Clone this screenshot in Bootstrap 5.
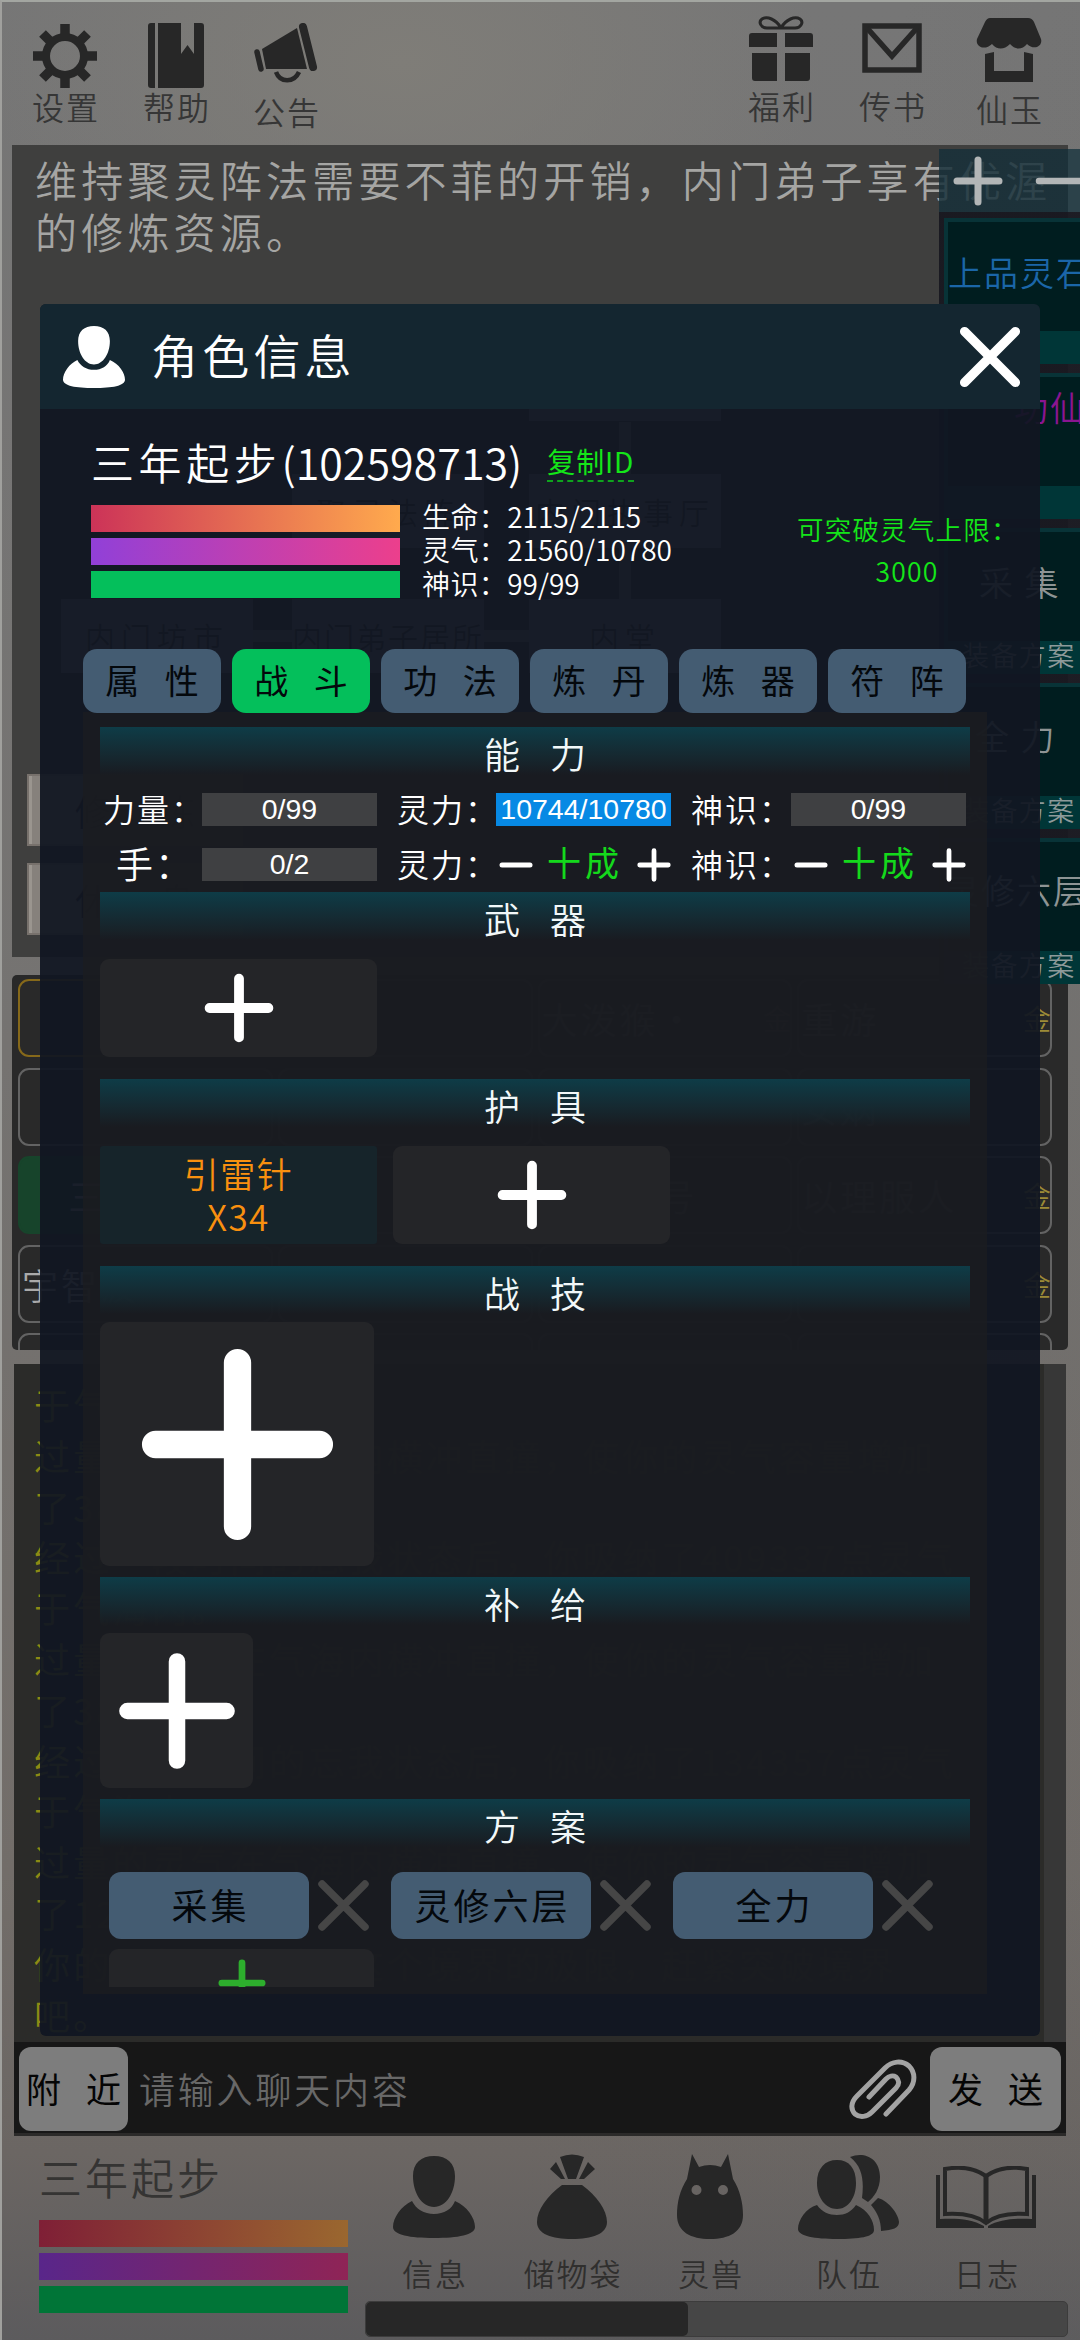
<!DOCTYPE html>
<html lang="zh-CN">
<head>
<meta charset="utf-8">
<title>角色信息</title>
<meta name="viewport" content="width=device-width, initial-scale=1">
<link rel="stylesheet" href="https://cdn.jsdelivr.net/npm/bootstrap@5.3.0/dist/css/bootstrap.min.css">
<style>
body{margin:0;background:#6b6865;font-family:"Noto Sans CJK SC","Noto Sans",sans-serif;font-weight:350;line-height:1;color:#fff}
svg{display:block;flex:none}
.screen{width:1080px;height:2340px;overflow:hidden;border-top:2px solid #a3a6a1;border-left:2px solid #a0a09d;
 background:radial-gradient(ellipse 420px 260px at 400px 60px,#7f7d78 0,#7f7d7800 100%),linear-gradient(100deg,#5b5a5b00 60%,#62626133),linear-gradient(#767676 0,#757371 45%,#726d69 80%,#6b6663 92%,#5c5b5d 100%)}
.screen *{white-space:nowrap}
/* top shortcuts */
.topbar{height:143px;padding:0 38px 0 30px}
.tool{color:#363636;font-size:32px;width:66px}
.tool .glyph{height:72px;color:#272727;justify-content:center;display:flex}
.tool span{letter-spacing:2px;line-height:34px;margin:-6px -2px 0 0}
/* scene panel */
.scene{height:812px;margin:0 10px;background:#3f3f3e;padding:8px 0 0 23px;font-size:42px;letter-spacing:4.2px;line-height:52px;color:#a5a5a3;width:1056px}
.node{background:#7d7b82;color:#2c2c2c;font-size:30px;letter-spacing:6px;height:74px;width:192px}
.link-line{background:#75737a}
.scroll-btn{background:#86817c;height:72px;width:216px;border:2px solid #77716c;box-shadow:inset 3px 0 0 #9a958f;color:#171717;font-size:36px;word-spacing:40px}
/* player list */
.roster{margin:18px 11px 0 10px;width:1056px;height:375px;background:#292929;border-radius:5px;padding:4px 16px 0 6px;overflow:hidden;display:grid;grid-template-columns:repeat(4,1fr);grid-auto-rows:78px;gap:10.5px 5px}
.roster div{border:2px solid #636363;border-radius:11px;color:#aaa;font-size:36px;letter-spacing:3px;padding-left:2px}
.roster i{color:#9c8b37;font-style:normal;font-size:28px;margin-right:-4px}
/* log */
.chatlog{margin:14px 0 0 12px;width:1052px;height:678px;background:#2b2b29;border-right:22px solid #373737;padding:15px 0 0 20px;color:#8d8a14;font-size:36px;line-height:50.8px;letter-spacing:3.2px;overflow:hidden}
.chatbar{margin-left:12px;width:1052px;height:94px;background:#171717;border-bottom:3px solid #2b2a29;padding:2px 5px 0 5px}
.grey-btn{background:#7d7d7d;color:#050505;border-radius:12px;height:84px;font-size:35px;font-weight:400;word-spacing:17px;display:flex;align-items:center;justify-content:center;padding-bottom:3px}
.prompt{color:#686868;font-size:36px;letter-spacing:2.8px}
/* footer */
.footer-bar{height:200px;margin-left:2px;position:relative}
.bar3{width:309px}
.bar3 div{height:27px;margin-bottom:6px}
.h1a{background:linear-gradient(90deg,#7f1f36,#9a672f)}.h2a{background:linear-gradient(90deg,#59268a,#8f2456)}.h3a{background:#007537}
.h1b{background:linear-gradient(90deg,#cc3358,#ffaa4d)}.h2b{background:linear-gradient(90deg,#9140d8,#ec3f8c)}.h3b{background:#04bf5b}
.navitem{color:#302f2e;font-size:31px;width:104px;flex:none}
.navitem .glyph{height:85px;color:#272727;display:flex;align-items:center;justify-content:center}
.navitem span{margin:17px -2px 0 0;line-height:34px;letter-spacing:2px}
.track{left:363px;top:2299px;width:703px;height:36px;background:#464646;border:1px solid #3c3c3c;border-radius:5px}
.track div{width:322px;height:34px;background:#272727;border-radius:5px}
/* side widget */
.side{left:939px;top:149px;width:190px;height:835px;background:linear-gradient(#17171f00 63px,#17171fee 63px)}
.side .ctl{height:63px;margin-bottom:-3px;background:linear-gradient(90deg,#162f39d4 129px,#2c424a 129px)}
.side .cell{margin:9px 0 0 5px;height:146px;background:#001d1f;border:4px solid #083337;border-bottom:0;border-right:0}
.side .cell .nm{flex:1;font-size:34px;letter-spacing:2px;color:#8d9494}
.side .cell .ft{height:33px;background:#003637;margin-left:-4px;font-size:27px;letter-spacing:1.4px;color:#8d9a9a}
/* dialog */
.dlg{left:40px;top:304px;width:1000px;height:1732px;border-radius:6px;background:#111622f0;overflow:hidden}
.dlg-head{height:105px;background:#142831ee;padding:0 19px 0 23px}
.dlg-head h1{font-size:47px;letter-spacing:4.2px;margin:-4px 0 0 26px;font-weight:350}
.who{font-size:43px;height:72px;padding:0 0 0 51px}
.who .nick{letter-spacing:4.6px}
.copyid{color:#14e619;font-size:28px;border-bottom:2px dashed #0fa31d;line-height:33px;margin-left:25px;margin-top:4px;font-weight:400;height:37px;letter-spacing:.8px}
.stat{font-size:28px;line-height:33.4px}
.stat b{font-weight:350;letter-spacing:.4px}
.limit{color:#14e619;font-size:26.5px;line-height:41.5px;letter-spacing:1.2px;width:220px}
.tabs{margin:0 0 0 43px;gap:11px}
.tab{width:138px;height:64px;background:#445c72;border-radius:14px;color:#04080c;font-size:34px;font-weight:400;word-spacing:18px;display:flex;align-items:center;justify-content:center;padding-bottom:2px}
.tab.on{background:#04bf5b}
.pane{margin:-1px 0 0 43px;width:904px;height:1282px;background:#1c1d20cc;padding:15px 17px 0;overflow:hidden}
.sec{height:48px;background:linear-gradient(#0e3c47,#152a32 55%,#1c1d2000);font-size:36px;word-spacing:22px;color:#f2f8f9;display:flex;align-items:center;justify-content:center;padding:4px 0 0 0;line-height:36px}
.lab{font-size:32px;letter-spacing:2px;width:102px;margin-top:-3px}
.fld{width:175px;height:33px;background:#3f4042;font-family:"Liberation Sans",Arial,sans-serif;font-size:28.5px;font-weight:400;display:flex;align-items:center;justify-content:center}
.fld.sel{background:#0789e4}
.step{width:175px;color:#14d91c;font-size:34px;letter-spacing:4px;padding:0 0 0 3px}
.step span{font-weight:400;margin-top:-5px}
.slot{width:277px;height:98px;background:#242528;border-radius:9px;display:flex;align-items:center;justify-content:center}
.item{background:#16242a;color:#f9900f;font-size:35px;line-height:43px;text-align:center;border-radius:3px;letter-spacing:1.5px;padding-bottom:2px}
.plan{width:200px;height:67px;background:#445c72;border-radius:12px;color:#04080c;font-size:36px;font-weight:400;letter-spacing:3px;display:flex;align-items:center;justify-content:center;padding:0 0 3px 3px}
.plans{gap:22px;padding-left:9px;margin-top:25px}
</style>
<script src="https://cdn.jsdelivr.net/npm/bootstrap@5.3.0/dist/js/bootstrap.bundle.min.js"></script>
</head>
<body>
<svg width="0" height="0" class="position-absolute">
 <symbol id="plus" viewBox="0 0 100 100"><path d="M50 8V92M8 50H92" stroke="currentColor" stroke-width="14" stroke-linecap="round"/></symbol>
 <symbol id="cross" viewBox="0 0 50 50"><path d="M4 4L46 46M46 4L4 46" stroke="currentColor" stroke-width="7.5" stroke-linecap="round"/></symbol>
 <symbol id="person" viewBox="0 0 82 82"><path fill="currentColor" d="M41 0C54 0 62 7 62 20C62 37 53 51 41 51S20 37 20 20C20 7 28 0 41 0ZM19 45C23 53 31 58 41 58S59 53 62 45C74 50 82 62 82 71C82 79 65 82 41 82S0 79 0 71C0 62 8 50 19 45Z"/></symbol>
</svg>
<div class="screen position-relative">
 <header class="topbar d-flex align-items-start">
  <div class="tool d-flex flex-column align-items-center" style="margin-top:21px"><div class="glyph"><svg width="66" height="66" viewBox="0 0 66 66" fill="none" stroke="currentColor"><circle cx="33" cy="33" r="19" stroke-width="8"/><path stroke-width="9.500" d="M33 1V12M33 54V65M1 33H12M54 33H65M10.500 10.500L19 19M47 47L55.500 55.500M10.500 55.500L19 47M47 19L55.500 10.500"/></svg></div><span>设置</span></div>
  <div class="tool d-flex flex-column align-items-center" style="margin:21px 0 0 45px"><div class="glyph"><svg width="56" height="65" viewBox="0 0 56 65" fill="currentColor"><path d="M3 0H7V65H3Q0 65 0 62V3Q0 0 3 0ZM10 0H33V31L39.500 22L46 31V0H53Q56 0 56 3V62Q56 65 53 65H10Z"/></svg></div><span>帮助</span></div>
  <div class="tool d-flex flex-column align-items-center" style="margin:21px 0 0 44px"><div class="glyph" style="height:77px"><svg width="64" height="60" viewBox="0 0 64 60"><path fill="currentColor" d="M8 26L43 5L53 46H12Z"/><path d="M49 4L59 44" stroke="currentColor" stroke-width="8" stroke-linecap="round"/><path d="M3 29L7 46" stroke="currentColor" stroke-width="5.500" stroke-linecap="round"/><path d="M22 49C26 60 40 60 45 49" fill="none" stroke="currentColor" stroke-width="4.500"/></svg></div><span>公告</span></div>
  <div class="tool d-flex flex-column align-items-center ms-auto" style="margin-top:14px"><div class="glyph" style="height:78px"><svg width="64" height="65" viewBox="0 0 64 65"><path fill="currentColor" d="M3 17H28V31H0V20Q0 17 3 17ZM36 17H61Q64 17 64 20V31H36ZM3 37H28V65H6Q3 65 3 62ZM36 37H61V62Q61 65 58 65H36Z"/><path d="M32 12C27 3 18 0 13 3C9 6 12 12 18 12C26 12 27 12 32 12C37 3 46 0 51 3C55 6 52 12 46 12Z" fill="none" stroke="currentColor" stroke-width="3"/></svg></div><span>福利</span></div>
  <div class="tool d-flex flex-column align-items-center" style="margin:21px 0 0 45px"><div class="glyph" style="height:71px"><svg width="60" height="50" viewBox="0 0 60 50" fill="none" stroke="currentColor"><path d="M3 3H57V47H3Z" stroke-width="5.500"/><path d="M5 5L30 33L55 5" stroke-width="5.500"/></svg></div><span>传书</span></div>
  <div class="tool d-flex flex-column align-items-center" style="margin:16px 0 0 51px"><div class="glyph" style="height:79px"><svg width="66" height="64" viewBox="0 0 66 64" fill="currentColor"><path d="M14 0H52Q56 0 58 4L65 21C67 28 58 33 51 26C46 32 39 32 34 26C28 32 21 32 16 26C9 33-1 29 1 21L9 4Q11 0 14 0Z"/><path d="M9 36L18 34V53H48V34L57 36V64H9Z"/></svg></div><span>仙玉</span></div>
 </header>

 <section class="scene">维持聚灵阵法需要不菲的开销，内门弟子享有优渥<br>的修炼资源。
 </section>
 <!-- map nodes of the current area -->
 <div class="position-absolute link-line" style="left:617px;top:420px;width:12px;height:180px"></div>
 <div class="position-absolute link-line" style="left:250px;top:628px;width:280px;height:12px"></div>
 <div class="node position-absolute d-flex align-items-center justify-content-center" style="left:527px;top:345px">修炼室</div>
 <div class="node position-absolute d-flex align-items-center justify-content-center" style="left:290px;top:472px">聚灵法阵</div>
 <div class="node position-absolute d-flex align-items-center justify-content-center" style="left:527px;top:472px">内门执事厅</div>
 <div class="node position-absolute d-flex align-items-center justify-content-center" style="left:59px;top:597px">内门坊市</div>
 <div class="node position-absolute d-flex align-items-center justify-content-center" style="left:290px;top:597px;letter-spacing:2px">内门弟子居所</div>
 <div class="node position-absolute d-flex align-items-center justify-content-center" style="left:527px;top:597px">内堂</div>
 <div class="scroll-btn position-absolute d-flex align-items-center justify-content-center" style="left:25px;top:772px">修 炼</div>
 <div class="scroll-btn position-absolute d-flex align-items-center justify-content-center" style="left:25px;top:861px">休 息</div>

 <section class="roster">
  <div style="border-color:#86691a"></div><div></div><div class="d-flex align-items-center justify-content-between">大泼猴·<i>金</i></div><div class="d-flex align-items-center justify-content-between">重游<i>金</i></div>
  <div></div><div></div><div></div><div class="d-flex align-items-center">女娲</div>
  <div class="d-flex align-items-center justify-content-center" style="background:#17442b;border-color:#17442b">三年起步</div><div></div><div class="d-flex align-items-center">三副丹号</div><div class="d-flex align-items-center justify-content-between">以理服人<i>金</i></div>
  <div class="d-flex align-items-center">宇智波</div><div></div><div></div><div class="d-flex align-items-center justify-content-end"><i>金</i></div>
  <div></div><div></div><div></div><div></div>
 </section>

 <section class="chatlog">于气海内。<br>过量的灵气在气海内横冲直撞，使你的灵气容量增加<br>了38。<br>经过一段时间的忘我状态后，你吸纳了409337点灵气<br>于气海内。<br>过量的灵气在气海内横冲直撞，使你的灵气容量增加<br>了38。<br>经过一段时间的忘我状态后，你吸纳了134357点灵气<br>于气海内。<br>过量的灵气在气海内横冲直撞，使你的灵气容量增加<br>了12。<br>你的灵气已达到了这个境界的极限，赶紧突破境界<br>吧。</section>

 <section class="chatbar d-flex align-items-center">
  <div class="grey-btn" style="width:109px">附 近</div><div class="prompt" style="margin:-2px 0 0 11px">请输入聊天内容</div>
  <svg class="ms-auto" width="68" height="60" viewBox="0 0 68 60" fill="none" stroke="#a3a3a3" stroke-width="5" stroke-linecap="round" stroke-linejoin="round"><path d="M37 55L60 31C67 23 66 13 60 7C53 1 43 2 36 9L8 37C1 44 2 51 6 55C11 59 18 58 23 53L47 29C51 25 50 21 47 18C44 16 40 17 37 20L20 38"/></svg>
  <div class="grey-btn" style="width:131px;margin-left:13px">发 送</div>
 </section>

 <footer class="footer-bar d-flex">
  <div style="padding:16px 0 0 35px;width:366px">
   <div style="font-size:43px;letter-spacing:3px;line-height:48px;color:#353433;margin-bottom:20px">三年起步</div>
   <div class="bar3"><div class="h1a"></div><div class="h2a"></div><div class="h3a"></div></div>
  </div>
  <div class="d-flex" style="padding-top:18px;margin-left:12px;gap:34px">
   <div class="navitem d-flex flex-column align-items-center"><div class="glyph"><svg width="82" height="82"><use href="#person"/></svg></div><span>信息</span></div>
   <div class="navitem d-flex flex-column align-items-center"><div class="glyph"><svg width="70" height="85" viewBox="0 0 70 85" fill="currentColor"><path d="M25 31H45C60 42 70 56 70 68C70 80 55 85 35 85S0 80 0 68C0 56 10 42 25 31ZM23 3Q35-2 47 3L39 25H31ZM19 8L28 25H24L13 15ZM51 8L58 15L47 25H42Z"/></svg></div><span>储物袋</span></div>
   <div class="navitem d-flex flex-column align-items-center"><div class="glyph"><svg width="66" height="85" viewBox="0 0 66 85"><path fill="currentColor" fill-rule="evenodd" d="M15 0L22 13Q33 9 44 13L51 0L56 25C63 36 66 49 66 61C66 78 52 85 33 85S0 78 0 61C0 48 3 36 10 25ZM19.500 31A5 5 0 1 0 19.500 41A5 5 0 1 0 19.500 31ZM46 31A5 5 0 1 0 46 41A5 5 0 1 0 46 31Z"/></svg></div><span>灵兽</span></div>
   <div class="navitem d-flex flex-column align-items-center"><div class="glyph"><svg width="101" height="85" viewBox="0 0 101 85" fill="currentColor"><path d="M39 6C51 6 58 14 58 29C58 44 50 55 39 55S19 44 19 29C19 14 27 6 39 6ZM19 51C24 58 31 61 39 61S53 58 58 51C70 56 76 67 76 76C76 83 61 85 39 85S0 82 0 75C0 66 8 54 19 51ZM52 3C66-3 82 4 82 23C82 35 76 43 70 48L64 44C66 28 65 13 52 3ZM80 44C91 47 101 61 101 68C101 74 95 76 83 77C83 66 79 58 73 51Z"/></svg></div><span>队伍</span></div>
   <div class="navitem d-flex flex-column align-items-center"><div class="glyph"><svg width="100" height="62" viewBox="0 0 100 62" fill="none" stroke="currentColor" stroke-width="4"><path d="M50 10C40 3 25 0 9 3V48C25 47 40 49 50 57C60 49 75 47 91 48V3C75 0 60 3 50 10Z"/><path d="M50 10V57" stroke-width="5"/><path d="M0 9H4V53C20 52 36 53 48 60V62H0ZM100 9H96V53C80 52 64 53 52 60V62H100Z" fill="currentColor" stroke="none"/></svg></div><span>日志</span></div>
  </div>
 </footer>
 <div class="track position-absolute"><div></div></div>

 <!-- floating quick panel, runs past the right edge -->
 <aside class="side position-absolute" style="margin:-2px 0 0 -2px">
  <div class="ctl d-flex align-items-center" style="color:#b3b6b7;padding-left:14px;gap:32px"><svg width="50" height="50"><use href="#plus"/></svg><svg width="50" height="50" viewBox="0 0 50 50"><path d="M4 25H46" stroke="currentColor" stroke-width="6.500" stroke-linecap="round"/></svg></div>
  <div class="cell d-flex flex-column"><div class="nm" style="color:#1b66a8;padding-top:33px">上品灵石</div><div class="ft"></div></div>
  <div class="cell d-flex flex-column"><div class="nm" style="color:#8a1590;padding:9px 0 0 66px;line-height:42px">功仙</div><div class="ft"></div></div>
  <div class="cell d-flex flex-column"><div class="nm" style="padding:33px 0 0 31px">采 集</div><div class="ft" style="padding:0 0 0 18px">装备方案</div></div>
  <div class="cell d-flex flex-column"><div class="nm" style="padding:32px 0 0 27px">全 力</div><div class="ft" style="padding:0 0 0 18px">装备方案</div></div>
  <div class="cell d-flex flex-column"><div class="nm" style="padding-top:31px;margin-left:-3px">灵修六层</div><div class="ft" style="padding:0 0 0 18px">装备方案</div></div>
 </aside>

 <!-- character dialog -->
 <main class="dlg position-absolute" style="margin:-2px 0 0 -2px">
  <div class="dlg-head d-flex align-items-center"><svg width="62" height="62"><use href="#person"/></svg><h1>角色信息</h1>
   <svg class="ms-auto" width="62" height="62" viewBox="0 0 50 50"><path d="M4.500 4.500L45.500 45.500M45.500 4.500L4.500 45.500" stroke="currentColor" stroke-width="7.500" stroke-linecap="round"/></svg></div>
  <div class="who d-flex align-items-center" style="margin-top:16px"><span class="nick">三年起步</span><span>(102598713)</span><span class="copyid">复制ID</span></div>
  <div class="d-flex" style="padding:8px 0 0 51px;height:150px">
   <div class="bar3"><div class="h1b"></div><div class="h2b"></div><div class="h3b"></div></div>
   <div class="stat" style="margin:-5px 0 0 22px;width:300px"><div><b>生命：</b>2115/2115</div><div><b>灵气：</b>21560/10780</div><div><b>神识：</b>99/99</div></div>
   <div class="limit text-center" style="margin:3px 0 0 75px">可突破灵气上限：<br>3000</div>
  </div>
  <div class="tabs d-flex" style="margin-top:2px"><div class="tab">属 性</div><div class="tab on">战 斗</div><div class="tab">功 法</div><div class="tab">炼 丹</div><div class="tab">炼 器</div><div class="tab">符 阵</div></div>
  <div class="pane">
   <div class="sec">能 力</div>
   <div class="d-flex align-items-center" style="margin-top:18px;height:33px"><div class="lab" style="padding-left:3px">力量：</div><div class="fld">0/99</div><div class="lab" style="margin-left:20px;width:99px">灵力：</div><div class="fld sel">10744/10780</div><div class="lab" style="margin-left:20px;width:100px">神识：</div><div class="fld">0/99</div></div>
   <div class="d-flex align-items-center" style="margin-top:22px;height:33px"><div class="lab" style="padding-left:16px;font-size:37px">手：</div><div class="fld">0/2</div><div class="lab" style="margin-left:20px;width:99px">灵力：</div>
    <div class="step d-flex align-items-center justify-content-between"><svg width="34" height="6"><path d="M3 3H31" stroke="#fff" stroke-width="5" stroke-linecap="round"/></svg><span>十成</span><svg width="34" height="34" color="#fff"><use href="#plus"/></svg></div>
    <div class="lab" style="margin-left:20px;width:100px">神识：</div>
    <div class="step d-flex align-items-center justify-content-between"><svg width="34" height="6"><path d="M3 3H31" stroke="#fff" stroke-width="5" stroke-linecap="round"/></svg><span>十成</span><svg width="34" height="34" color="#fff"><use href="#plus"/></svg></div></div>
   <div class="sec" style="margin-top:11px">武 器</div>
   <div class="slot" style="margin-top:19px"><svg width="70" height="70"><use href="#plus"/></svg></div>
   <div class="sec" style="margin-top:22px">护 具</div>
   <div class="d-flex" style="margin-top:19px;gap:16px"><div class="slot item"><div>引雷针<br>X34</div></div><div class="slot"><svg width="70" height="70"><use href="#plus"/></svg></div></div>
   <div class="sec" style="margin-top:22px">战 技</div>
   <div class="slot" style="margin-top:8px;width:274px;height:244px"><svg width="195" height="195"><use href="#plus"/></svg></div>
   <div class="sec" style="margin-top:11px">补 给</div>
   <div class="slot" style="margin-top:8px;width:153px;height:155px"><svg width="118" height="118"><use href="#plus"/></svg></div>
   <div class="sec" style="margin-top:11px">方 案</div>
   <div class="plans d-flex" style="color:#464646">
    <div class="d-flex align-items-center" style="gap:9px"><div class="plan">采集</div><svg width="51" height="51"><use href="#cross"/></svg></div>
    <div class="d-flex align-items-center" style="gap:9px"><div class="plan">灵修六层</div><svg width="51" height="51"><use href="#cross"/></svg></div>
    <div class="d-flex align-items-center" style="gap:9px"><div class="plan">全力</div><svg width="51" height="51"><use href="#cross"/></svg></div></div>
   <div class="overflow-hidden" style="height:38px;margin:10px 0 0 9px"><div class="slot align-items-start" style="width:265px;padding-top:10px"><svg width="48" height="48" color="#2dae2d"><use href="#plus"/></svg></div></div>
  </div>
 </main>
</div>
</body>
</html>
